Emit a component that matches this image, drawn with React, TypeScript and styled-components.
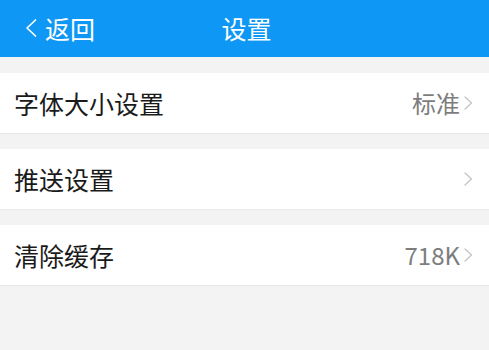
import React from "react";
import styled, { createGlobalStyle } from "styled-components";

const Global = createGlobalStyle`
  html, body { margin: 0; padding: 0; background: #f3f3f3; }
  body { font-family: "Noto Sans CJK SC", "Noto Sans", sans-serif; }
`;

const Page = styled.div`
  width: 489px;
  min-height: 350px;
  background: #f3f3f3;
  display: flex;
  flex-direction: column;
`;

const Header = styled.div`
  height: 57px;
  background: #0e97f4;
  display: grid;
  grid-template-columns: 1fr auto 1fr;
  align-items: center;
  color: #fff;
  padding: 0 0 1px 0;
  box-sizing: border-box;
`;

const Back = styled.div`
  display: flex;
  align-items: center;
  gap: 8px;
  padding-left: 25px;
  font-size: 25px;
  line-height: 1;
`;

const Title = styled.div`
  font-size: 25px;
  line-height: 1;
  padding-left: 4px;
`;

const List = styled.div`
  display: flex;
  flex-direction: column;
  gap: 15px;
  padding-top: 16px;
`;

const Row = styled.div`
  height: 61px;
  background: #fff;
  border-bottom: 1px solid #e8e8e8;
  box-sizing: border-box;
  display: flex;
  align-items: center;
  justify-content: space-between;
  padding: 0 16px 0 14px;
`;

const Label = styled.span`
  font-size: 25px;
  color: #1a1a1a;
  line-height: 1;
`;

const Right = styled.div`
  display: flex;
  align-items: center;
  gap: 4px;
`;

const Value = styled.span`
  font-size: 24px;
  color: #7d7d7d;
  line-height: 1;
`;

const Chevron = ({ color, w = 9, h = 14, sw = 1.3 }: { color: string; w?: number; h?: number; sw?: number }) => (
  <svg width={w} height={h} viewBox={`0 0 ${w} ${h}`} fill="none">
    <path d={`M1 1 L${w - 1.5} ${h / 2} L1 ${h - 1}`} stroke={color} strokeWidth={sw} strokeLinecap="round" strokeLinejoin="round" />
  </svg>
);

const BackChevron = () => (
  <svg width="12" height="20" viewBox="0 0 12 20" fill="none">
    <path d="M10.5 2 L2 10 L10.5 18" stroke="#fff" strokeWidth="1.7" strokeLinecap="round" strokeLinejoin="round" />
  </svg>
);

const items = [
  { label: "字体大小设置", value: "标准" },
  { label: "推送设置", value: "" },
  { label: "清除缓存", value: "718K" },
];

export default function App() {
  return (
    <Page>
      <Global />
      <Header>
        <Back>
          <BackChevron />
          <span>返回</span>
        </Back>
        <Title>设置</Title>
        <div />
      </Header>
      <List>
        {items.map((it) => (
          <Row key={it.label}>
            <Label>{it.label}</Label>
            <Right>
              {it.value && <Value>{it.value}</Value>}
              <Chevron color="#c4c4c4" />
            </Right>
          </Row>
        ))}
      </List>
    </Page>
  );
}
